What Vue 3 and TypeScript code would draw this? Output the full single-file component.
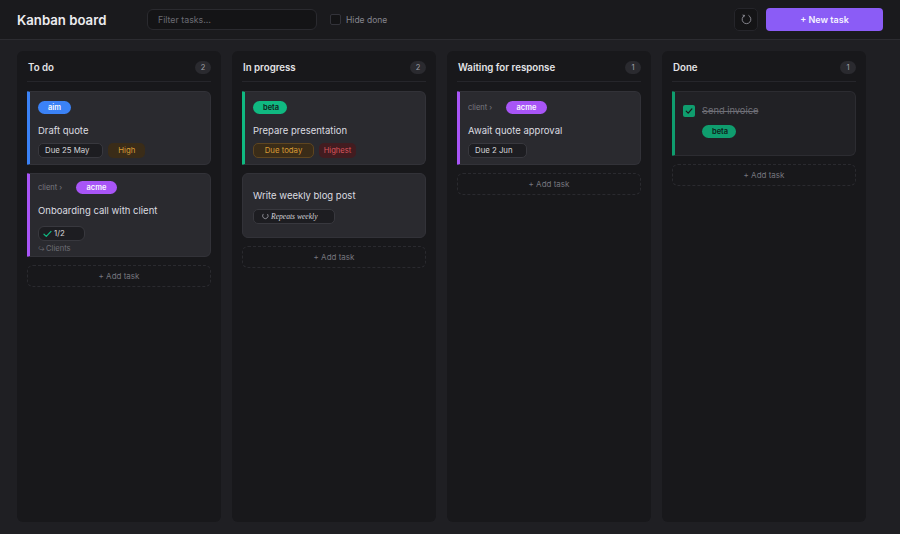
<script setup lang="ts">
interface Task {
  id: number
  title: string
  accent?: string
  crumb?: string
  tag?: string
  tagClass?: string
  due?: string
  dueClass?: string
  priority?: string
  priorityClass?: string
  checks?: string
  link?: string
  repeat?: string
  done?: boolean
}

interface Column {
  name: string
  tasks: Task[]
}

const columns: Column[] = [
  {
    name: 'To do',
    tasks: [
      { id: 1, title: 'Draft quote', accent: 'blue', tag: 'aim', tagClass: 'tag-aim', due: 'Due 25 May', priority: 'High', priorityClass: 'pri-high' },
      { id: 2, title: 'Onboarding call with client', accent: 'purple', crumb: 'client ›', tag: 'acme', tagClass: 'tag-acme', checks: '1/2', link: 'Clients' },
    ],
  },
  {
    name: 'In progress',
    tasks: [
      { id: 3, title: 'Prepare presentation', accent: 'green', tag: 'beta', tagClass: 'tag-beta', due: 'Due today', dueClass: 'due-today', priority: 'Highest', priorityClass: 'pri-highest' },
      { id: 4, title: 'Write weekly blog post', repeat: 'Repeats weekly' },
    ],
  },
  {
    name: 'Waiting for response',
    tasks: [
      { id: 5, title: 'Await quote approval', accent: 'purple', crumb: 'client ›', tag: 'acme', tagClass: 'tag-acme', due: 'Due 2 Jun' },
    ],
  },
  {
    name: 'Done',
    tasks: [
      { id: 6, title: 'Send invoice', accent: 'green', tag: 'beta', tagClass: 'tag-beta', done: true },
    ],
  },
]
</script>

<template>
  <div class="board">
    <header class="topbar">
      <h1>Kanban board</h1>
      <input class="filter" type="text" placeholder="Filter tasks…" />
      <label class="hide-done"><span class="box"></span>Hide done</label>
      <div class="spacer"></div>
      <button class="icon-btn" aria-label="Refresh">
        <svg width="11" height="11" viewBox="0 0 11 11" fill="none" stroke="#8f8f97" stroke-width="0.9" stroke-linecap="round">
          <path d="M3.2 1.5A4.4 4.4 0 1 0 7.8 1.5" />
          <path d="M3.2 1.5 1.9 1.1M3.2 1.5 2.9 2.8" />
        </svg>
      </button>
      <button class="new-btn">+ New task</button>
    </header>

    <main class="columns">
      <section v-for="col in columns" :key="col.name" class="column">
        <div class="col-head">
          <h2>{{ col.name }}</h2>
          <span class="count">{{ col.tasks.length }}</span>
        </div>

        <article
          v-for="task in col.tasks"
          :key="task.id"
          class="card"
          :class="[task.accent, { done: task.done, plain: !task.accent, 'has-checks': task.checks }]"
        >
          <template v-if="task.done">
            <div class="done-row">
              <span class="checked">
                <svg width="8" height="8" viewBox="0 0 8 8" fill="none" stroke="#18181b" stroke-width="1.2" stroke-linecap="round" stroke-linejoin="round">
                  <path d="M1.2 4.2 3.2 6.2 6.9 1.9" />
                </svg>
              </span>
              <span class="done-title">{{ task.title }}</span>
            </div>
            <div class="done-tag"><span class="tag" :class="task.tagClass">{{ task.tag }}</span></div>
          </template>

          <template v-else>
            <div v-if="task.tag" class="meta-row">
              <span v-if="task.crumb" class="crumb">{{ task.crumb }}</span>
              <span class="tag" :class="task.tagClass">{{ task.tag }}</span>
            </div>
            <div class="title">{{ task.title }}</div>
            <div v-if="task.due" class="chips">
              <span class="chip due" :class="task.dueClass">{{ task.due }}</span>
              <span v-if="task.priority" class="chip pri" :class="task.priorityClass">{{ task.priority }}</span>
            </div>
            <div v-if="task.checks" class="chips">
              <span class="chip checks">
                <svg width="9" height="8" viewBox="0 0 9 8" fill="none" stroke="#10b981" stroke-width="1.2" stroke-linecap="round" stroke-linejoin="round">
                  <path d="M1 4.2 3.3 6.4 8 1.4" />
                </svg>
                {{ task.checks }}
              </span>
            </div>
            <div v-if="task.link" class="link"><span class="link-arrow">↪</span>{{ task.link }}</div>
            <div v-if="task.repeat" class="chips">
              <span class="chip repeat">
                <svg width="7" height="7" viewBox="0 0 8 8" fill="none" stroke="#a1a1aa" stroke-width="0.9" stroke-linecap="round">
                  <path d="M1.2 1.4A3.2 3.2 0 1 0 6.6 1.6" />
                </svg>
                {{ task.repeat }}
              </span>
            </div>
          </template>
        </article>

        <button class="add">+ Add task</button>
      </section>
    </main>
  </div>
</template>

<style scoped>
.board {
  width: 900px;
  height: 534px;
  display: flex;
  flex-direction: column;
  background: #1f1f23;
  font-family: Inter, "Liberation Sans", sans-serif;
  color: #e4e4e7;
  overflow: hidden;
}

.topbar {
  height: 40px;
  box-sizing: border-box;
  flex: none;
  display: flex;
  align-items: center;
  padding: 0 17px;
  background: #1a1a1d;
  border-bottom: 1px solid #2c2c31;
}

h1 {
  margin: 0;
  width: 130px;
  font-size: 13.2px;
  font-weight: 600;
  color: #ececef;
  white-space: nowrap;
}

.filter {
  width: 170px;
  height: 21px;
  box-sizing: border-box;
  padding: 0 10px;
  background: #141416;
  border: 1px solid #2a2a2f;
  border-radius: 6px;
  font: 8.8px Inter, sans-serif;
  color: #e4e4e7;
  outline: none;
}

.filter::placeholder {
  color: #6b6b73;
}

.hide-done {
  display: flex;
  align-items: center;
  gap: 5px;
  margin-left: 13px;
  font-size: 8.5px;
  color: #85858d;
}

.box {
  width: 11px;
  height: 11px;
  box-sizing: border-box;
  background: #141416;
  border: 1px solid #33333a;
  border-radius: 2px;
}

.spacer {
  flex: 1;
}

.icon-btn {
  width: 24px;
  height: 23px;
  display: flex;
  align-items: center;
  justify-content: center;
  padding: 0;
  background: #141416;
  border: 1px solid #25252a;
  border-radius: 5px;
}

.new-btn {
  width: 117px;
  height: 23px;
  margin-left: 8px;
  padding: 0;
  background: #8b5cf6;
  border: none;
  border-radius: 4px;
  font: 600 9px Inter, sans-serif;
  color: #f5f3ff;
}

.columns {
  flex: 1;
  display: flex;
  gap: 11px;
  padding: 11px 17px 12px;
}

.column {
  width: 204px;
  box-sizing: border-box;
  padding: 0 10px;
  background: #18181b;
  border-radius: 6px;
  display: flex;
  flex-direction: column;
  gap: 8px;
}

.col-head {
  height: 31px;
  box-sizing: border-box;
  display: flex;
  align-items: center;
  justify-content: space-between;
  padding: 3px 0 0 1px;
  margin-bottom: 1px;
  border-bottom: 1px solid #26262b;
}

h2 {
  margin: 0;
  font-size: 9.7px;
  font-weight: 600;
  color: #e4e4e7;
}

.count {
  width: 16px;
  height: 13px;
  border-radius: 7px;
  background: #2a2a2f;
  font-size: 7.5px;
  line-height: 13px;
  text-align: center;
  color: #a1a1aa;
}

.card {
  box-sizing: border-box;
  padding: 8px 10px 6px 8px;
  background: #2a2a2f;
  border: 1px solid #323238;
  border-left: 3px solid #323238;
  border-radius: 1px 6px 6px 1px;
}

.card.blue {
  border-left-color: #3b82f6;
}

.card.purple {
  border-left-color: #a855f7;
}

.card.green {
  border-left-color: #10b981;
}

.card.has-checks {
  padding-top: 6px;
  padding-bottom: 2px;
}

.card.plain {
  padding: 15px 10px 13px 10px;
  border-left-width: 1px;
  border-radius: 6px;
}

.card.done {
  height: 65px;
  background: #212125;
  border-color: #2c2c31;
  border-left-color: #0f9d6e;
  padding-top: 12px;
}

.meta-row {
  display: flex;
  align-items: center;
  height: 14px;
}

.crumb {
  width: 38px;
  font-size: 7.5px;
  color: #7a7a82;
}

.tag {
  display: inline-block;
  min-width: 32px;
  box-sizing: border-box;
  padding: 0 10px;
  height: 13px;
  border-radius: 7px;
  font-size: 7.5px;
  font-weight: 600;
  line-height: 13px;
  text-align: center;
}

.tag-aim {
  background: #3b82f6;
  color: #f8fafc;
}

.tag-acme {
  width: 41px;
  background: #a855f7;
  color: #f8fafc;
}

.tag-beta {
  width: 34px;
  background: #10b981;
  color: #10201a;
}

.title {
  margin-top: 10px;
  font-size: 9.5px;
  line-height: 14px;
  color: #dcdce0;
}

.has-checks .title {
  margin-top: 10px;
  margin-bottom: 8px;
}

.card.plain .title {
  margin-top: 0;
}

.chips {
  display: flex;
  gap: 5px;
  margin-top: 5px;
}

.plain .chips {
  margin-top: 6px;
}

.chip {
  height: 15px;
  box-sizing: border-box;
  border-radius: 5px;
  font-size: 7.8px;
  line-height: 13px;
  border: 1px solid transparent;
  padding: 0 6px;
}

.due {
  padding: 0 13px 0 6px;
  background: #1d1d21;
  border-color: #38383e;
  color: #d4d4d8;
}

.due-today {
  width: 61px;
  padding: 0;
  text-align: center;
  background: #3a2c18;
  border-color: #5e4520;
  color: #d89b35;
}

.pri-high {
  width: 37px;
  padding: 0;
  text-align: center;
  background: #3a2c18;
  color: #d89b35;
}

.pri-highest {
  width: 37px;
  padding: 0;
  font-size: 7.6px;
  text-align: center;
  background: #421c20;
  color: #d9555c;
}

.checks {
  width: 47px;
  display: flex;
  align-items: center;
  gap: 2px;
  padding: 0 4px;
  border-radius: 6px;
  background: #1d1d21;
  border-color: #38383e;
  color: #d4d4d8;
}

.link {
  margin-top: 3px;
  font-size: 7.6px;
  line-height: 10px;
  color: #6e6e76;
}

.link-arrow {
  display: inline-block;
  width: 8px;
  font-size: 6px;
}

.repeat {
  width: 82px;
  display: flex;
  align-items: center;
  gap: 2px;
  padding: 0 8px;
  background: #1d1d21;
  border-color: #38383e;
  font-family: "Liberation Serif", serif;
  font-style: italic;
  font-size: 7.6px;
  color: #d4d4d8;
}

.done-row {
  display: flex;
  align-items: center;
  gap: 7px;
}

.checked {
  width: 12px;
  height: 12px;
  display: flex;
  align-items: center;
  justify-content: center;
  border-radius: 2px;
  background: #0f9d6e;
}

.done-title {
  font-size: 9.3px;
  line-height: 14px;
  color: #6e6e76;
  text-decoration: line-through;
}

.done-tag {
  display: flex;
  margin: 7px 0 0 19px;
}

.done-tag .tag-beta {
  background: #0f9d6e;
}

.add {
  height: 22px;
  padding: 0;
  background: transparent;
  border: 1px dashed #2a2a2f;
  border-radius: 6px;
  font: 8px Inter, sans-serif;
  color: #75757d;
}
</style>
